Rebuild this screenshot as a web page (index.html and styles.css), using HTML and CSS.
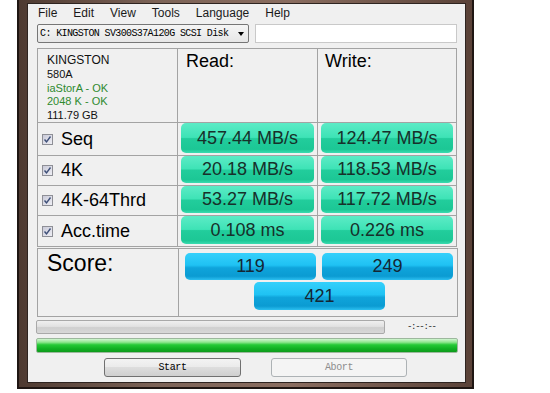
FILE: index.html
```html
<!DOCTYPE html>
<html lang="en">
<head>
    <meta charset="UTF-8">
    <title>AS SSD Benchmark</title>
    <link rel="stylesheet" href="styles.css">
</head>
<body>
    <div class="window">
        <div class="client">
            <ul class="menu">
                <li>File</li>
                <li>Edit</li>
                <li>View</li>
                <li>Tools</li>
                <li>Language</li>
                <li>Help</li>
            </ul>

            <div class="toolbar">
                <div class="combo">
                    <span>C: KINGSTON SV300S37A120G SCSI Disk</span>
                    <span class="arrow"></span>
                </div>
                <div class="field"></div>
            </div>

            <div class="results">
                <div class="cell info">
                    <div class="model">KINGSTON</div>
                    <div>580A</div>
                    <div class="ok">iaStorA - OK</div>
                    <div class="ok">2048 K - OK</div>
                    <div>111.79 GB</div>
                </div>
                <div class="cell head">Read:</div>
                <div class="cell head write">Write:</div>

                <div class="cell label"><span class="check"><svg width="9" height="9" viewBox="0 0 9 9"><path d="M1.5 4.5 L3.5 6.8 L7.5 1.5" fill="none" stroke="#3e4f78" stroke-width="1.4"/></svg></span>Seq</div>
                <div class="cell value"><div class="speed">457.44 MB/s</div></div>
                <div class="cell value"><div class="speed">124.47 MB/s</div></div>

                <div class="cell label"><span class="check"><svg width="9" height="9" viewBox="0 0 9 9"><path d="M1.5 4.5 L3.5 6.8 L7.5 1.5" fill="none" stroke="#3e4f78" stroke-width="1.4"/></svg></span>4K</div>
                <div class="cell value"><div class="speed">20.18 MB/s</div></div>
                <div class="cell value"><div class="speed">118.53 MB/s</div></div>

                <div class="cell label"><span class="check"><svg width="9" height="9" viewBox="0 0 9 9"><path d="M1.5 4.5 L3.5 6.8 L7.5 1.5" fill="none" stroke="#3e4f78" stroke-width="1.4"/></svg></span>4K-64Thrd</div>
                <div class="cell value"><div class="speed">53.27 MB/s</div></div>
                <div class="cell value"><div class="speed">117.72 MB/s</div></div>

                <div class="cell label"><span class="check"><svg width="9" height="9" viewBox="0 0 9 9"><path d="M1.5 4.5 L3.5 6.8 L7.5 1.5" fill="none" stroke="#3e4f78" stroke-width="1.4"/></svg></span>Acc.time</div>
                <div class="cell value"><div class="speed">0.108 ms</div></div>
                <div class="cell value"><div class="speed">0.226 ms</div></div>
            </div>

            <div class="score">
                <div class="cell score-label">Score:</div>
                <div class="cell score-values">
                    <div class="points">119</div>
                    <div class="points">249</div>
                    <div class="points total">421</div>
                </div>
            </div>

            <div class="progress-row">
                <div class="bar-empty"></div>
                <span class="timer">-:--:--</span>
            </div>
            <div class="bar-full"></div>

            <div class="buttons">
                <button class="btn">Start</button>
                <button class="btn" disabled>Abort</button>
            </div>
        </div>
    </div>
</body>
</html>
```

FILE: styles.css
```css
body {
    margin: 0;
    background-color: #fff;
    font-family: 'Liberation Sans', Arial, sans-serif;
}
.window {
    margin-left: 17px;
    width: 457px;
    height: 389px;
    box-sizing: border-box;
    border: 2px solid #1f1613;
    border-top: none;
    padding: 3px 6px 4px 8px;
    background: linear-gradient(90deg, #4e3a31, #7c6357 30%, #8a6d60 60%, #5a4238);
}
.client {
    height: 100%;
    box-sizing: border-box;
    border: 1px solid #2e2420;
    background-color: #f0f0f0;
    padding: 0 8px 0 9px;
}
.menu {
    display: flex;
    gap: 16px;
    list-style: none;
    margin: 0;
    padding: 0 0 0 1px;
    height: 20px;
    line-height: 19px;
    font-size: 12px;
    color: #1a1a1a;
}
.toolbar {
    display: flex;
    gap: 6px;
    height: 19px;
}
.combo {
    display: flex;
    align-items: center;
    width: 212px;
    box-sizing: border-box;
    border: 1px solid #767676;
    border-radius: 2px;
    background: linear-gradient(#f5f5f5, #e6e6e6);
    padding: 0 4px 0 2px;
    font-family: 'Liberation Mono', monospace;
    font-size: 10px;
    letter-spacing: -0.62px;
    color: #000;
}
.arrow {
    margin-left: auto;
    width: 0;
    height: 0;
    border-left: 3.5px solid transparent;
    border-right: 3.5px solid transparent;
    border-top: 4px solid #000;
}
.field {
    width: 202px;
    box-sizing: border-box;
    border: 1px solid #c9c9c9;
    background-color: #fff;
}
.results {
    display: grid;
    grid-template-columns: 139px 139px 138px;
    grid-template-rows: 73px 32px 29px 29px 30px;
    gap: 1px;
    width: 420px;
    box-sizing: border-box;
    margin-top: 5px;
    border: 1px solid #a3a3a3;
    background-color: #a3a3a3;
}
.cell {
    background-color: #f0f0f0;
}
.info {
    padding: 3px 0 0 9px;
    font-size: 11px;
    line-height: 13.5px;
    color: #111;
}
.info .model {
    font-size: 12px;
    line-height: 16px;
}
.info .ok {
    color: #2f8a2f;
}
.head {
    padding: 1px 0 0 8px;
    font-size: 18px;
    line-height: 22px;
}
.head.write {
    padding-left: 7px;
}
.label {
    display: flex;
    align-items: center;
    padding-left: 4px;
    font-size: 18px;
}
.check {
    display: flex;
    align-items: center;
    justify-content: center;
    width: 11px;
    height: 11px;
    box-sizing: border-box;
    margin-right: 8px;
    border: 1px solid #8e8f96;
    background: linear-gradient(135deg, #c9cad8, #eeeef4);
}
.value {
    padding: 0 3px 2px 3px;
    display: flex;
}
.speed {
    flex: 1;
    display: flex;
    align-items: center;
    justify-content: center;
    border-radius: 5px;
    background: linear-gradient(#5cebc6, #3ee3b6 48%, #22cd9c 52%, #1cc795 88%, #3adcb0);
    font-size: 18px;
    color: #17302a;
}
.score {
    display: grid;
    grid-template-columns: 140px 278px;
    gap: 1px;
    width: 421px;
    height: 69px;
    box-sizing: border-box;
    margin-top: 1px;
    border: 1px solid #a3a3a3;
    background-color: #a3a3a3;
}
.score-label {
    padding: 1px 9px;
    font-size: 23px;
    line-height: 27px;
}
.score-values {
    display: grid;
    grid-template-columns: 131px 131px;
    grid-template-rows: 27px 28px;
    column-gap: 6px;
    row-gap: 2px;
    padding: 4px 4px 0 6px;
}
.points {
    display: flex;
    align-items: center;
    justify-content: center;
    border-radius: 5px;
    background: linear-gradient(#35d0fb, #1fc2f3 45%, #0fa4db 55%, #0b9bd2 86%, #2bbff0);
    font-size: 18px;
    color: #142634;
}
.points.total {
    grid-column: 1 / span 2;
    justify-self: center;
    width: 131px;
    margin-left: 1px;
}
.progress-row {
    display: flex;
    align-items: center;
    margin: 3px 0 0 -1px;
}
.bar-empty {
    width: 349px;
    height: 14px;
    box-sizing: border-box;
    border: 1px solid #a9a9a9;
    border-radius: 2px;
    background: linear-gradient(#efefef, #e2e2e2 45%, #cfcfcf 55%, #d8d8d8);
}
.timer {
    margin-left: 22px;
    font-family: 'Liberation Mono', monospace;
    font-size: 9px;
    letter-spacing: -1.3px;
    color: #222;
}
.bar-full {
    width: 422px;
    height: 15px;
    box-sizing: border-box;
    margin: 4px 0 0 -1px;
    border: 1px solid #9db89d;
    border-radius: 2px;
    background: linear-gradient(#d2f5d2, #8ee68e 25%, #25c936 45%, #10b022 75%, #0e9a1c);
}
.buttons {
    display: flex;
    gap: 30px;
    margin: 5px 0 0 67px;
}
.btn {
    width: 137px;
    height: 19px;
    padding: 0;
    border: 1px solid #707070;
    border-radius: 3px;
    background: linear-gradient(#f3f3f3, #ebebeb 45%, #dddddd 50%, #cfcfcf);
    font-family: 'Liberation Mono', monospace;
    font-size: 10px;
    letter-spacing: -0.4px;
    color: #000;
}
.btn:disabled {
    width: 136px;
    border-color: #adb2b5;
    background: #f4f4f4;
    color: #8d8d8d;
}
```
